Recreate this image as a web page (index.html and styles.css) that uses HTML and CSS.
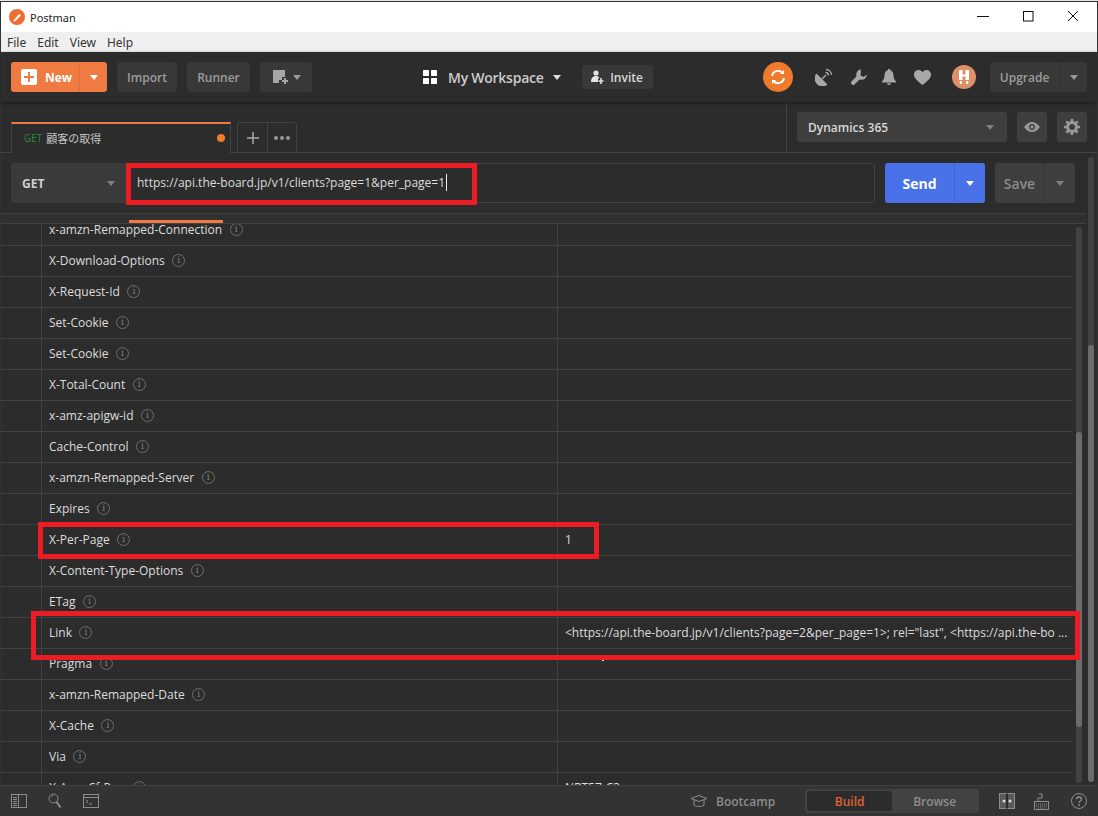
FILE: index.html
```html
<!DOCTYPE html>
<html lang="en">
<head>
<meta charset="utf-8">
<title>Postman</title>
<link rel="stylesheet" href="styles.css">
</head>
<body>
<div class="window">
  <div class="titlebar">
    <svg class="app-logo" width="16" height="16" viewBox="0 0 16 16"><circle cx="8" cy="8" r="8" fill="#ef6c33"/><path d="M4 12l6-7 2 1.500-6 6z" fill="#fff"/></svg>
    <span class="app-name">Postman</span>
    <div class="win-controls">
      <svg width="12" height="12" viewBox="0 0 12 12"><path d="M0 5.500h12" stroke="#111" fill="none"/></svg>
      <svg width="12" height="12" viewBox="0 0 12 12"><rect x="1.500" y=".5" width="9.500" height="9.500" stroke="#111" fill="none"/></svg>
      <svg width="12" height="12" viewBox="0 0 12 12"><path d="M1 0l10 10M11 0L1 10" stroke="#111" fill="none"/></svg>
    </div>
  </div>
  <div class="menubar"><span>File</span><span>Edit</span><span>View</span><span>Help</span></div>

  <header class="header">
    <div class="split-btn new-btn">
      <span class="new-main">
        <svg width="16" height="16" viewBox="0 0 16 16"><rect width="16" height="16" rx="2" fill="#fff"/><path d="M8 3v10M3 8h10" stroke="#ef7a42" stroke-width="2"/></svg>
        New
      </span>
      <span class="split-caret"><i class="caret caret-white"></i></span>
    </div>
    <button class="hbtn import-btn">Import</button>
    <button class="hbtn runner-btn">Runner</button>
    <button class="hbtn builder-btn">
      <svg width="18" height="16" viewBox="0 0 18 16"><path d="M1 1h12v7h-3v3H7v3H1z" fill="#a5a5a5"/><path d="M13 9v6M10 12h6" stroke="#a5a5a5" stroke-width="2"/></svg>
      <i class="caret caret-grey"></i>
    </button>
    <div class="workspace">
      <svg width="14" height="14" viewBox="0 0 14 14"><g fill="#fff"><rect width="6" height="6" rx=".6"/><rect x="8" width="6" height="6" rx=".6"/><rect y="8" width="6" height="6" rx=".6"/><rect x="8" y="8" width="6" height="6" rx=".6"/></g></svg>
      <span class="ws-name">My Workspace</span>
      <i class="caret caret-light"></i>
    </div>
    <button class="invite-btn">
      <svg width="13" height="14" viewBox="0 0 13 14"><g fill="#e4e4e4"><circle cx="5" cy="3" r="2.600"/><path d="M0 12c0-4 2-6 5-6 1.500 0 2.600.5 3.300 1.500L7 9v3z"/><path d="M10 8v6M7.500 11h5" stroke="#e4e4e4" stroke-width="1.600"/></g></svg>
      Invite
    </button>
    <div class="sync">
      <svg width="18" height="18" viewBox="0 0 18 18" fill="none" stroke="#fff" stroke-width="2"><path d="M3 8a6 6 0 0 1 10.500-3"/><path d="M15 10a6 6 0 0 1-10.500 3"/><path d="M15 2v4h-4z" fill="#fff" stroke="none"/><path d="M3 16v-4h4z" fill="#fff" stroke="none"/></svg>
    </div>
    <div class="tools">
      <svg class="t-sat" width="18" height="18" viewBox="0 0 18 18"><path d="M12.500 16.500A7.800 7.800 0 0 1 1.500 5.500z" fill="#a8a8a8"/><path d="M7 11l4-4" stroke="#a8a8a8" stroke-width="1.500"/><path d="M10.500 4.500a3 3 0 0 1 3 3M11 1.500a5.500 5.500 0 0 1 5.500 5.500" stroke="#a8a8a8" fill="none" stroke-width="1.300"/></svg>
      <svg class="t-wrench" width="17" height="17" viewBox="0 0 17 17"><path d="M3.200 13.800L9 8" stroke="#a8a8a8" stroke-width="4.400" stroke-linecap="round"/><circle cx="11.500" cy="5.500" r="5.200" fill="#a8a8a8"/><path d="M10.500 6.500L17 0v5.500l-3.500 2.500zM10.500 6.500L11 0h6z" fill="#2c2c2c"/></svg>
      <svg class="t-bell" width="14" height="16" viewBox="0 0 14 16"><path d="M7 0c.8 0 1.300.5 1.300 1.200C10.500 2 11.500 4 11.500 6.500c0 3 1 4.500 2.500 6v1H0v-1C1.500 11 2.500 9.500 2.500 6.500 2.500 4 3.500 2 5.700 1.200 5.700.5 6.200 0 7 0zM5 14.300h4C9 15.300 8 16 7 16s-2-.7-2-1.700z" fill="#a8a8a8"/></svg>
      <svg class="t-heart" width="17" height="15" viewBox="0 0 17 15"><path d="M8.500 15C3 10.500 0 8 0 4.500 0 2 2 0 4.500 0c1.600 0 3.100.8 4 2.200C9.400.8 10.900 0 12.500 0 15 0 17 2 17 4.500 17 8 14 10.500 8.500 15z" fill="#a8a8a8"/></svg>
    </div>
    <div class="avatar">
      <svg width="10" height="14" viewBox="0 0 10 14"><g fill="#fff"><path d="M0 1a1.500 1.500 0 0 1 3.500 0v9H0zM6.500 1A1.500 1.500 0 0 1 10 1v9H6.500z"/><rect x="3" y="4.500" width="4" height="2"/><rect x=".8" y="11" width="2" height="3"/><rect x="7.200" y="11" width="2" height="3"/></g></svg>
    </div>
    <div class="split-btn upgrade">
      <span class="up-main">Upgrade</span>
      <span class="up-caret"><i class="caret caret-grey"></i></span>
    </div>
  </header>

  <div class="main">
    <div class="tabbar">
      <div class="tabs">
        <div class="tab">
          <span class="tab-method">GET</span>
          <span class="tab-name">顧客の取得</span>
          <i class="tab-dot"></i>
        </div>
        <div class="tab-tools">
          <span class="tt-add"><svg width="12" height="12" viewBox="0 0 12 12"><path d="M6 0v12M0 6h12" stroke="#aaa" stroke-width="1.500"/></svg></span>
          <span class="tt-more"><i></i><i></i><i></i></span>
        </div>
      </div>
      <div class="envbar">
        <div class="env-select"><span>Dynamics 365</span><i class="caret caret-dim"></i></div>
        <button class="env-icon">
          <svg width="16" height="10" viewBox="0 0 16 10"><path d="M0 5c2-3 5-5 8-5s6 2 8 5c-2 3-5 5-8 5S2 8 0 5z" fill="#999"/><circle cx="8" cy="5" r="3" fill="#424242"/><circle cx="8" cy="5" r="1.600" fill="#999"/></svg>
        </button>
        <button class="env-icon">
          <svg width="16" height="16" viewBox="0 0 16 16"><circle cx="8" cy="8" r="4.500" fill="none" stroke="#999" stroke-width="3"/><path d="M8 0v3M8 13v3M0 8h3M13 8h3M2.300 2.300l2.200 2.200M11.500 11.500l2.200 2.200M2.300 13.700l2.200-2.200M11.500 4.500l2.200-2.200" stroke="#999" stroke-width="2.600"/></svg>
        </button>
      </div>
    </div>

    <div class="urlrow">
      <div class="method-select"><span>GET</span><i class="caret caret-dim"></i></div>
      <div class="url-input">https://api.the-board.jp/v1/clients?page=1&amp;per_page=1<i class="text-cursor"></i></div>
      <div class="split-btn send"><span class="send-main">Send</span><span class="send-caret"><i class="caret caret-white"></i></span></div>
      <div class="split-btn save"><span class="save-main">Save</span><span class="save-caret"><i class="caret caret-dim"></i></span></div>
    </div>

    <div class="subtabs"><i class="subtab-active"></i></div>

    <div class="table-wrap">
      <div class="rows">
        <div class="row"><div class="c0"></div><div class="c1">x-amzn-Remapped-Connection<i class="info">i</i></div><div class="c2"></div></div>
        <div class="row"><div class="c0"></div><div class="c1">X-Download-Options<i class="info">i</i></div><div class="c2"></div></div>
        <div class="row"><div class="c0"></div><div class="c1">X-Request-Id<i class="info">i</i></div><div class="c2"></div></div>
        <div class="row"><div class="c0"></div><div class="c1">Set-Cookie<i class="info">i</i></div><div class="c2"></div></div>
        <div class="row"><div class="c0"></div><div class="c1">Set-Cookie<i class="info">i</i></div><div class="c2"></div></div>
        <div class="row"><div class="c0"></div><div class="c1">X-Total-Count<i class="info">i</i></div><div class="c2"></div></div>
        <div class="row"><div class="c0"></div><div class="c1">x-amz-apigw-id<i class="info">i</i></div><div class="c2"></div></div>
        <div class="row"><div class="c0"></div><div class="c1">Cache-Control<i class="info">i</i></div><div class="c2"></div></div>
        <div class="row"><div class="c0"></div><div class="c1">x-amzn-Remapped-Server<i class="info">i</i></div><div class="c2"></div></div>
        <div class="row"><div class="c0"></div><div class="c1">Expires<i class="info">i</i></div><div class="c2"></div></div>
        <div class="row"><div class="c0"></div><div class="c1">X-Per-Page<i class="info">i</i></div><div class="c2">1</div></div>
        <div class="row"><div class="c0"></div><div class="c1">X-Content-Type-Options<i class="info">i</i></div><div class="c2"></div></div>
        <div class="row"><div class="c0"></div><div class="c1">ETag<i class="info">i</i></div><div class="c2"></div></div>
        <div class="row"><div class="c0"></div><div class="c1">Link<i class="info">i</i></div><div class="c2">&lt;https://api.the-board.jp/v1/clients?page=2&amp;per_page=1&gt;; rel="last", &lt;https://api.the-bo ...</div></div>
        <div class="row"><div class="c0"></div><div class="c1">Pragma<i class="info">i</i></div><div class="c2"></div></div>
        <div class="row"><div class="c0"></div><div class="c1">x-amzn-Remapped-Date<i class="info">i</i></div><div class="c2"></div></div>
        <div class="row"><div class="c0"></div><div class="c1">X-Cache<i class="info">i</i></div><div class="c2"></div></div>
        <div class="row"><div class="c0"></div><div class="c1">Via<i class="info">i</i></div><div class="c2"></div></div>
        <div class="row"><div class="c0"></div><div class="c1">X-Amz-Cf-Pop<i class="info">i</i></div><div class="c2">NRT57-C3</div></div>
      </div>
      <div class="inner-scroll"><i></i></div>
    </div>
  </div>

  <footer class="footer">
    <svg class="f-icon" width="16" height="14" viewBox="0 0 16 14" fill="none" stroke="#8d8d8d"><rect x=".5" y=".5" width="15" height="13"/><path d="M7.500 .5v13M2 3.500h4M2 5.500h4M2 7.500h4M2 9.500h4M2 11.500h4"/></svg>
    <svg class="f-icon f-find" width="14" height="16" viewBox="0 0 14 16" fill="none" stroke="#8d8d8d"><circle cx="5.500" cy="5.500" r="4.500"/><path d="M8.500 9l4 5.500" stroke-width="2"/><path d="M3.500 3.500a3 3 0 0 1 2-.6"/></svg>
    <svg class="f-icon f-console" width="16" height="14" viewBox="0 0 16 14" fill="none" stroke="#8d8d8d"><rect x=".5" y=".5" width="15" height="13"/><path d="M.5 3.500h15M3 6l2 1.500L3 9M6 10h3"/></svg>
    <div class="bootcamp">
      <svg width="18" height="13" viewBox="0 0 18 13" fill="none" stroke="#8d8d8d"><path d="M1 3.500L9 .5l8 3-8 3zM4 5v5c2 2 8 2 10 0V5"/></svg>
      <span>Bootcamp</span>
    </div>
    <div class="segment"><span class="seg-on">Build</span><span class="seg-off">Browse</span></div>
    <svg class="f-icon f-two" width="16" height="16" viewBox="0 0 16 16"><rect x=".5" y=".5" width="15" height="15" fill="#5a5a5a" stroke="#8d8d8d"/><path d="M8 .5v15" stroke="#2c2c2c" stroke-width="2"/><circle cx="5" cy="8" r="1.500" fill="#ddd"/><circle cx="11" cy="8" r="1.500" fill="#ddd"/></svg>
    <svg class="f-icon f-kb" width="15" height="17" viewBox="0 0 15 17" fill="none" stroke="#8d8d8d"><rect x=".5" y="8.500" width="14" height="8"/><path d="M2 11h11M2 13h11M4 15h7" stroke-dasharray="1 1"/><path d="M4 8V5h4V1H5"/></svg>
    <svg class="f-icon f-help" width="16" height="16" viewBox="0 0 16 16" fill="none" stroke="#8d8d8d"><circle cx="8" cy="8" r="7.500"/><path d="M5.500 6.300C5.500 5 6.500 4 8 4s2.500 1 2.500 2.200C10.500 8 8 8 8 10" stroke-width="1.300"/><circle cx="8" cy="12" r=".6" fill="#8d8d8d"/></svg>
  </footer>

  <div class="outer-scroll"><i></i></div>
  <i class="stray"></i>
  <i class="annot annot-url"></i>
  <i class="annot annot-page"></i>
  <i class="annot annot-link"></i>
</div>
</body>
</html>
```

FILE: styles.css
```css
* { box-sizing: border-box; }
html, body { margin: 0; padding: 0; height: 100%; overflow: hidden; }
html { background: #e9e9e9; }
body { font-family: "Open Sans", "Noto Sans CJK JP", sans-serif; font-size: 12px; color: #ddd; background: #e9e9e9; padding-top: 1px; }
button { font-family: inherit; border: 0; padding: 0; cursor: default; }

.window { position: relative; width: 1098px; height: 815px; background: #2c2c2c; display: flex; flex-direction: column; border-top: 1px solid #333; border-left: 1px solid #333; border-right: 1px solid #333; }

.titlebar { flex: 0 0 30px; background: #fff; display: flex; align-items: center; padding-left: 8px; }
.app-name { margin-left: 5px; font-family: "Noto Sans", sans-serif; font-size: 11px; color: #222; }
.win-controls { margin-left: auto; display: flex; gap: 33px; padding-right: 18px; }
.menubar { flex: 0 0 20px; background: #efefef; display: flex; align-items: center; gap: 11px; padding-left: 6px; font-family: "Noto Sans", sans-serif; font-size: 12px; color: #333; }

.caret { display: block; width: 0; height: 0; border-left: 4px solid transparent; border-right: 4px solid transparent; border-top: 5px solid #fff; }
.caret-white { border-top-color: #fff; }
.caret-grey { border-top-color: #9a9a9a; }
.caret-light { border-top-color: #ddd; }
.caret-dim { border-top-color: #808080; }

.header { flex: 0 0 50px; background: #2c2c2c; box-shadow: 0 1px 3px rgba(0,0,0,.45); display: flex; align-items: center; padding-left: 10px; position: relative; z-index: 1; }
.split-btn { display: flex; border-radius: 3px; overflow: hidden; }
.new-btn { width: 96px; height: 30px; background: #ef7a42; color: #fff; font-weight: 700; font-size: 12px; }
.new-main { width: 69px; display: flex; align-items: center; gap: 8px; padding-left: 10px; border-right: 1px solid #d9703e; }
.split-caret { flex: 1; display: flex; align-items: center; justify-content: center; }
.hbtn { height: 30px; background: #383838; border-radius: 3px; color: #9c9c9c; font-size: 12px; font-weight: 600; display: flex; align-items: center; justify-content: center; }
.import-btn { width: 60px; margin-left: 10px; }
.runner-btn { width: 63px; margin-left: 10px; }
.builder-btn { width: 52px; margin-left: 10px; gap: 3px; }
.workspace { display: flex; align-items: center; margin-left: 111px; }
.ws-name { margin-left: 11px; margin-right: 9px; font-size: 14px; font-weight: 600; color: #ccc; letter-spacing: -.25px; }
.invite-btn { margin-left: 21px; width: 71px; height: 24px; background: #383838; border-radius: 3px; color: #d8d8d8; font-size: 12px; font-weight: 600; display: flex; align-items: center; justify-content: center; gap: 6px; }
.sync { margin-left: 110px; width: 30px; height: 30px; border-radius: 50%; background: #f07a2c; display: flex; align-items: center; justify-content: center; }
.tools { display: flex; align-items: center; margin-left: 22px; }
.t-wrench { margin-left: 17px; }
.t-bell { margin-left: 15px; }
.t-heart { margin-left: 18px; }
.avatar { margin-left: 21px; width: 24px; height: 24px; border-radius: 50%; background: #de9067; display: flex; align-items: center; justify-content: center; }
.upgrade { margin-left: 14px; width: 97px; height: 30px; background: #383838; color: #9c9c9c; font-size: 12px; font-weight: 600; }
.up-main { width: 71px; display: flex; align-items: center; justify-content: center; border-right: 1px solid #333; }
.up-caret { flex: 1; display: flex; align-items: center; justify-content: center; }

.main { flex: 1; min-height: 0; display: flex; flex-direction: column; }

.tabbar { flex: 0 0 51px; display: flex; border-bottom: 1px solid #424242; }
.tabs { width: 786px; display: flex; align-items: flex-end; padding-left: 10px; border-right: 1px solid #424242; }
.tab { width: 220px; height: 31px; margin-bottom: -1px; border-top: 2px solid #ef7a42; border-left: 1px solid #424242; border-right: 1px solid #424242; background: #2c2c2c; display: flex; align-items: center; padding: 0 0 1px 12px; position: relative; }
.tab-method { font-size: 10px; color: #26883f; }
.tab-name { margin-left: 4px; font-size: 11px; color: #c8c8c8; }
.tab-dot { margin-left: auto; margin-right: 5px; width: 8px; height: 8px; border-radius: 50%; background: #ef7a2c; }
.tab-tools { margin-left: 6px; height: 30px; width: 60px; display: flex; border: 1px solid #424242; border-bottom: 0; border-radius: 3px 3px 0 0; }
.tt-add { width: 30px; display: flex; align-items: center; justify-content: center; border-right: 1px solid #424242; }
.tt-more { flex: 1; display: flex; align-items: center; justify-content: center; gap: 2px; }
.tt-more i { width: 4px; height: 4px; border-radius: 50%; background: #999; }
.envbar { flex: 1; display: flex; align-items: flex-start; padding: 10px 0 0 10px; gap: 10px; }
.env-select { width: 210px; height: 30px; background: #3e3e3e; border-radius: 3px; display: flex; align-items: center; justify-content: space-between; padding: 0 13px 0 11px; font-weight: 600; color: #d8d8d8; }
.env-icon { width: 30px; height: 30px; background: #3e3e3e; border-radius: 3px; display: flex; align-items: center; justify-content: center; }

.urlrow { flex: 0 0 61px; display: flex; align-items: flex-start; padding: 10px 0 0 10px; border-bottom: 1px solid #424242; width: 1085px; }
.method-select { width: 115px; height: 40px; background: #3a3a3a; border-radius: 3px 0 0 3px; display: flex; align-items: center; justify-content: space-between; padding: 0 11px; font-weight: 700; color: #cfcfcf; }
.url-input { width: 749px; height: 40px; background: #2c2c2c; border: 1px solid #424242; border-radius: 0 3px 3px 0; display: flex; align-items: center; padding: 0 0 2px 10px; font-size: 12px; color: #ddd; }
.text-cursor { width: 1px; height: 17px; background: #eee; margin-left: 1px; }
.send { margin-left: 10px; width: 100px; height: 40px; background: #4a72e8; color: #fff; font-weight: 700; font-size: 14px; }
.send-main { width: 70px; display: flex; align-items: center; justify-content: center; border-right: 1px solid #3f63cc; }
.send-caret { flex: 1; display: flex; align-items: center; justify-content: center; }
.save { margin-left: 10px; width: 80px; height: 40px; background: #3e3e3e; color: #8c8c8c; font-weight: 600; font-size: 14px; }
.save-main { width: 50px; display: flex; align-items: center; justify-content: center; border-right: 1px solid #363636; }
.save-caret { flex: 1; display: flex; align-items: center; justify-content: center; }

.subtabs { flex: 0 0 10px; width: 1085px; border-bottom: 1px solid #424242; background: #303030; position: relative; }
.subtab-active { position: absolute; left: 128px; bottom: 0; width: 94px; height: 3px; background: #ef7a42; }

.table-wrap { flex: 1; min-height: 0; overflow: hidden; position: relative; }
.rows { margin-top: -9px; width: 1072px; }
.row { height: 31px; display: flex; border-bottom: 1px solid #424242; }
.c0 { width: 41px; border-right: 1px solid #424242; }
.c1 { width: 516px; border-right: 1px solid #424242; display: flex; align-items: center; padding: 0 0 2px 7px; color: #ddd; }
.c2 { flex: 1; min-width: 0; display: flex; align-items: center; padding: 0 0 2px 7px; color: #ddd; white-space: nowrap; overflow: hidden; }
.info { margin-left: 7.5px; width: 13px; height: 13px; border: 1px solid #6e6e6e; border-radius: 50%; color: #808080; font-family: "DejaVu Serif", serif; font-style: normal; font-size: 9px; line-height: 11px; text-align: center; }
.inner-scroll { position: absolute; left: 1075px; top: 3px; bottom: 2px; width: 6px; background: #424242; border-radius: 3px; }
.inner-scroll i { display: block; margin-top: 205px; height: 295px; background: #6b6b6b; border-radius: 3px; }
.outer-scroll { position: absolute; left: 1087px; top: 155px; width: 6px; height: 625px; background: #424242; border-radius: 3px; padding-top: 188px; }
.outer-scroll i { display: block; height: 100%; background: #6b6b6b; border-radius: 3px; }

.footer { flex: 0 0 31px; background: #333; border-top: 1px solid #424242; display: flex; align-items: center; padding-left: 10px; color: #8d8d8d; }
.f-find { margin-left: 21px; }
.f-console { margin-left: 21px; }
.bootcamp { margin-left: 591px; display: flex; align-items: center; gap: 8px; font-weight: 600; font-size: 12px; }
.segment { margin-left: 30px; width: 174px; height: 24px; background: #424242; border-radius: 3px; padding: 2px; display: flex; font-size: 12px; font-weight: 600; }
.seg-on { width: 85px; background: #2c2c2c; border-radius: 3px; color: #e0603a; display: flex; align-items: center; justify-content: center; }
.seg-off { flex: 1; display: flex; align-items: center; justify-content: center; color: #8d8d8d; }
.f-two { margin-left: 20px; }
.f-kb { margin-left: 19px; }
.f-help { margin-left: 22px; }

.stray { position: absolute; left: 601px; top: 658px; width: 2px; height: 1px; background: #ddd; z-index: 5; }
.annot { position: absolute; border: 5px solid #ed1c24; pointer-events: none; z-index: 5; }
.annot-url { left: 125px; top: 161px; width: 351px; height: 42px; }
.annot-page { left: 37px; top: 520px; width: 561px; height: 37px; }
.annot-link { left: 30px; top: 609px; width: 1049px; height: 49px; }
```
